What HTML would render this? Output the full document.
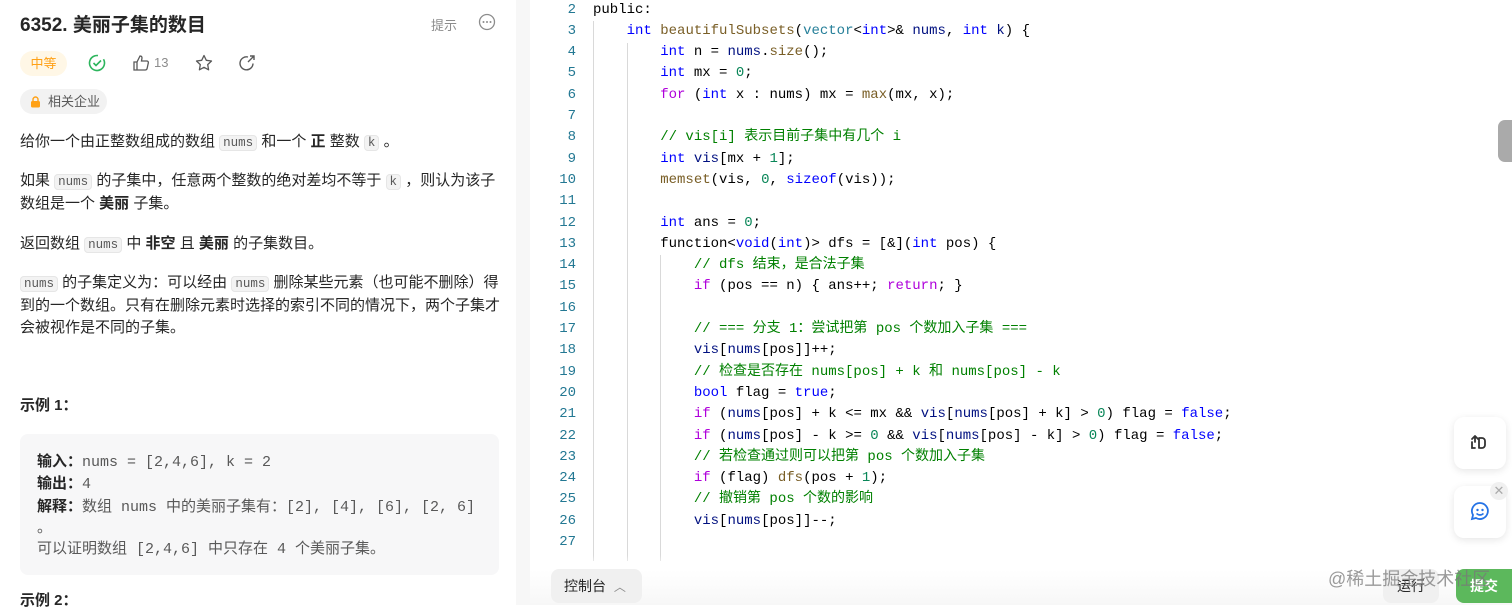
<!DOCTYPE html>
<html><head><meta charset="utf-8"><style>
*{margin:0;padding:0;box-sizing:border-box}
body{width:1512px;height:605px;overflow:hidden;background:#fff;font-family:"Liberation Sans","Noto Sans CJK SC",sans-serif;color:#262626;position:relative}
.left{position:absolute;left:0;top:0;width:516px;height:605px;background:#fff}
.div{position:absolute;left:516px;top:0;width:14px;height:605px;background:#f7f7f7}
.title{position:absolute;left:20px;top:10px;font-size:19px;font-weight:bold;color:#262626}
.hint{position:absolute;left:431px;top:15px;font-size:13px;color:#8c8c8c}
.p{position:absolute;left:20px;font-size:15px;line-height:22px;width:482px;color:#262626}
.cd{font-family:"Liberation Mono",monospace;font-size:12.5px;background:#f3f3f3;border:1px solid #e6e6e6;border-radius:4px;padding:0 3px;color:#595959}
b{font-weight:bold}
.ex{position:absolute;left:20px;top:434px;width:479px;height:141px;background:#f7f7f8;border-radius:8px;padding:17px 17px;font-size:15px;line-height:21.3px}
.ex .m{font-family:"Liberation Mono","Noto Sans CJK SC",monospace;color:#595959}
.code{position:absolute;left:530px;top:-0.5px;font-family:"Liberation Mono","Noto Sans CJK SC",monospace;font-size:14px;line-height:21.3px;color:#000}
.ln{position:absolute;left:0;width:46px;text-align:right;color:#237893}
.src{position:absolute;left:63px;white-space:pre}
.k{color:#0000ff}.t{color:#267f99}.f{color:#795e26}.c{color:#008000}.n{color:#098658}.q{color:#af00db}.v{color:#001080}
.guide{position:absolute;width:1px;background:#d9d9d9}
.fb{position:absolute;left:1454px;width:52px;height:52px;background:#fff;border-radius:10px;box-shadow:0 2px 8px rgba(0,0,0,.1)}
</style></head><body>
<div class="left">
<div class="title">6352. 美丽子集的数目</div>
<div class="hint">提示</div>
<svg style="position:absolute;left:478px;top:13px" width="18" height="18"><circle cx="9" cy="9" r="7.5" fill="none" stroke="#8c8c8c" stroke-width="1.3"/><circle cx="5.5" cy="9" r="1" fill="#8c8c8c"/><circle cx="9" cy="9" r="1" fill="#8c8c8c"/><circle cx="12.5" cy="9" r="1" fill="#8c8c8c"/></svg>
<div style="position:absolute;left:20px;top:51px;width:47px;height:25px;border-radius:13px;background:#fff7e6;color:#ffa116;font-size:13px;line-height:25px;text-align:center">中等</div>
<svg style="position:absolute;left:88px;top:54px" width="18" height="18"><circle cx="9" cy="9" r="7.5" fill="none" stroke="#2db55d" stroke-width="1.6" stroke-dasharray="40 7" transform="rotate(-30 9 9)"/><path d="M5.5 9l2.5 2.5 5-5" fill="none" stroke="#2db55d" stroke-width="1.6"/></svg>
<svg style="position:absolute;left:132px;top:54px" width="18" height="18"><path d="M2 8h3v8H2zM5 8l3-6c1.5 0 2 1 2 2l-.5 3H15c1 0 1.5 1 1.3 2l-1.2 5.5c-.2 1-1 1.5-2 1.5H5" fill="none" stroke="#595959" stroke-width="1.3"/></svg>
<div style="position:absolute;left:154px;top:55px;font-size:13px;color:#8c8c8c">13</div>
<svg style="position:absolute;left:195px;top:54px" width="18" height="18"><path d="M9 1.5l2.3 4.8 5.2.7-3.8 3.6.9 5.2L9 13.3 4.4 15.8l.9-5.2L1.5 7l5.2-.7z" fill="none" stroke="#595959" stroke-width="1.3" stroke-linejoin="round"/></svg>
<svg style="position:absolute;left:238px;top:54px" width="18" height="18"><path d="M15 9.5A6.5 6.5 0 1 1 10 3" fill="none" stroke="#595959" stroke-width="1.4"/><path d="M12 2h4v4M16 2l-6 6" fill="none" stroke="#595959" stroke-width="1.4"/></svg>
<div style="position:absolute;left:20px;top:89px;width:87px;height:25px;border-radius:13px;background:#f2f2f2;font-size:13px;line-height:25px;color:#595959;padding-left:28px">相关企业</div>
<svg style="position:absolute;left:30px;top:96px" width="11" height="12"><path d="M3 5V3.5a2.5 2.5 0 0 1 5 0V5" fill="none" stroke="#ffa116" stroke-width="1.4"/><rect x="1" y="5" width="9" height="6.5" rx="1.5" fill="#ffa116"/></svg>
<div class="p" style="top:131px">给你一个由正整数组成的数组 <span class="cd">nums</span> 和一个 <b>正</b> 整数 <span class="cd">k</span> 。</div>
<div class="p" style="top:170px">如果 <span class="cd">nums</span> 的子集中，任意两个整数的绝对差均不等于 <span class="cd">k</span> ，则认为该子<br>数组是一个 <b>美丽</b> 子集。</div>
<div class="p" style="top:233px">返回数组 <span class="cd">nums</span> 中 <b>非空</b> 且 <b>美丽</b> 的子集数目。</div>
<div class="p" style="top:272px"><span class="cd">nums</span> 的子集定义为：可以经由 <span class="cd">nums</span> 删除某些元素（也可能不删除）得<br>到的一个数组。只有在删除元素时选择的索引不同的情况下，两个子集才<br>会被视作是不同的子集。</div>
<div class="p" style="top:395px;font-weight:bold">示例 1：</div>
<div class="ex">
<div><b>输入：</b><span class="m">nums = [2,4,6], k = 2</span></div>
<div><b>输出：</b><span class="m">4</span></div>
<div><b>解释：</b><span class="m">数组 nums 中的美丽子集有：[2], [4], [6], [2, 6]</span></div>
<div class="m">。</div>
<div class="m">可以证明数组 [2,4,6] 中只存在 4 个美丽子集。</div>
</div>
<div class="p" style="top:590px;font-weight:bold">示例 2：</div>
</div>
<div class="div"></div>
<div class="code">
<div class="guide" style="left:63px;top:21px;height:540px"></div>
<div class="guide" style="left:97px;top:43px;height:518px"></div>
<div class="guide" style="left:130px;top:255px;height:306px"></div>
<div class="ln" style="top:0">2</div><div class="src" style="top:0">public:</div>
<div class="ln" style="top:21.3px">3</div><div class="src" style="top:21.3px">    <span class="k">int</span> <span class="f">beautifulSubsets</span>(<span class="t">vector</span>&lt;<span class="k">int</span>&gt;&amp; <span class="v">nums</span>, <span class="k">int</span> <span class="v">k</span>) {</div>
<div class="ln" style="top:42.6px">4</div><div class="src" style="top:42.6px">        <span class="k">int</span> n = <span class="v">nums</span>.<span class="f">size</span>();</div>
<div class="ln" style="top:63.9px">5</div><div class="src" style="top:63.9px">        <span class="k">int</span> mx = <span class="n">0</span>;</div>
<div class="ln" style="top:85.2px">6</div><div class="src" style="top:85.2px">        <span class="q">for</span> (<span class="k">int</span> x : nums) mx = <span class="f">max</span>(mx, x);</div>
<div class="ln" style="top:106.5px">7</div>
<div class="ln" style="top:127.8px">8</div><div class="src c" style="top:127.8px">        // vis[i] 表示目前子集中有几个 i</div>
<div class="ln" style="top:149.1px">9</div><div class="src" style="top:149.1px">        <span class="k">int</span> <span class="v">vis</span>[mx + <span class="n">1</span>];</div>
<div class="ln" style="top:170.4px">10</div><div class="src" style="top:170.4px">        <span class="f">memset</span>(vis, <span class="n">0</span>, <span class="k">sizeof</span>(vis));</div>
<div class="ln" style="top:191.7px">11</div>
<div class="ln" style="top:213px">12</div><div class="src" style="top:213px">        <span class="k">int</span> ans = <span class="n">0</span>;</div>
<div class="ln" style="top:234.3px">13</div><div class="src" style="top:234.3px">        function&lt;<span class="k">void</span>(<span class="k">int</span>)&gt; dfs = [&amp;](<span class="k">int</span> pos) {</div>
<div class="ln" style="top:255.6px">14</div><div class="src c" style="top:255.6px">            // dfs 结束，是合法子集</div>
<div class="ln" style="top:276.9px">15</div><div class="src" style="top:276.9px">            <span class="q">if</span> (pos == n) { ans++; <span class="q">return</span>; }</div>
<div class="ln" style="top:298.2px">16</div>
<div class="ln" style="top:319.5px">17</div><div class="src c" style="top:319.5px">            // === 分支 1：尝试把第 pos 个数加入子集 ===</div>
<div class="ln" style="top:340.8px">18</div><div class="src" style="top:340.8px">            <span class="v">vis</span>[<span class="v">nums</span>[pos]]++;</div>
<div class="ln" style="top:362.1px">19</div><div class="src c" style="top:362.1px">            // 检查是否存在 nums[pos] + k 和 nums[pos] - k</div>
<div class="ln" style="top:383.4px">20</div><div class="src" style="top:383.4px">            <span class="k">bool</span> flag = <span class="k">true</span>;</div>
<div class="ln" style="top:404.7px">21</div><div class="src" style="top:404.7px">            <span class="q">if</span> (<span class="v">nums</span>[pos] + k &lt;= mx &amp;&amp; <span class="v">vis</span>[<span class="v">nums</span>[pos] + k] &gt; <span class="n">0</span>) flag = <span class="k">false</span>;</div>
<div class="ln" style="top:426px">22</div><div class="src" style="top:426px">            <span class="q">if</span> (<span class="v">nums</span>[pos] - k &gt;= <span class="n">0</span> &amp;&amp; <span class="v">vis</span>[<span class="v">nums</span>[pos] - k] &gt; <span class="n">0</span>) flag = <span class="k">false</span>;</div>
<div class="ln" style="top:447.3px">23</div><div class="src c" style="top:447.3px">            // 若检查通过则可以把第 pos 个数加入子集</div>
<div class="ln" style="top:468.6px">24</div><div class="src" style="top:468.6px">            <span class="q">if</span> (flag) <span class="f">dfs</span>(pos + <span class="n">1</span>);</div>
<div class="ln" style="top:489.9px">25</div><div class="src c" style="top:489.9px">            // 撤销第 pos 个数的影响</div>
<div class="ln" style="top:511.2px">26</div><div class="src" style="top:511.2px">            <span class="v">vis</span>[<span class="v">nums</span>[pos]]--;</div>
<div class="ln" style="top:532.5px">27</div>
</div>
<div style="position:absolute;left:530px;top:555px;width:982px;height:50px;background:linear-gradient(rgba(255,255,255,0),#fff 30%,#f7f7f7)"></div>
<div style="position:absolute;left:551px;top:569px;width:91px;height:34px;background:#f0f0f0;border-radius:8px;font-size:14px;line-height:34px;color:#262626;padding-left:13px">控制台 <span style="color:#8c8c8c;font-size:12px;margin-left:4px">︿</span></div>
<div style="position:absolute;left:1383px;top:569px;width:56px;height:34px;background:#f0f0f0;border-radius:8px;font-size:14px;line-height:34px;text-align:center;color:#262626">运行</div>
<div style="position:absolute;left:1456px;top:569px;width:56px;height:34px;background:#5cb85c;border-radius:8px 0 0 8px;font-size:14px;line-height:34px;text-align:center;color:#fff;font-weight:bold">提交</div>
<div style="position:absolute;left:1328px;top:565px;font-size:18px;color:rgba(120,120,120,.75);white-space:nowrap">@稀土掘金技术社区</div>
<div style="position:absolute;left:1498px;top:120px;width:14px;height:42px;background:#aaa;border-radius:7px 0 0 7px"></div>
<div class="fb" style="top:417px"><svg style="position:absolute;left:14px;top:14px" width="24" height="24"><path d="M4 11v6h3" fill="none" stroke="#333" stroke-width="1.8" stroke-linecap="round"/><path d="M4 8l3-3 3 3M7 5v6" fill="none" stroke="#333" stroke-width="1.8" stroke-linecap="round" stroke-linejoin="round"/><path d="M11 7h3a3 3 0 0 1 3 3v4a3 3 0 0 1-3 3h-2M11 7v10" fill="none" stroke="#333" stroke-width="1.8" stroke-linecap="round"/></svg></div>
<div class="fb" style="top:486px"><svg style="position:absolute;left:15px;top:14px" width="22" height="22"><path d="M11 3a8 8 0 1 1-4 15l-4 1 1-4A8 8 0 0 1 11 3z" fill="none" stroke="#2573e6" stroke-width="1.8"/><circle cx="8.5" cy="10" r="1.2" fill="#2573e6"/><circle cx="13.5" cy="10" r="1.2" fill="#2573e6"/><path d="M7.5 13.5q3.5 3 7 0" fill="none" stroke="#2573e6" stroke-width="1.6"/></svg></div>
<div style="position:absolute;left:1490px;top:482px;width:18px;height:18px;border-radius:9px;background:#f0f0f0;color:#aaa;font-size:13px;line-height:18px;text-align:center">✕</div>
</body></html>
